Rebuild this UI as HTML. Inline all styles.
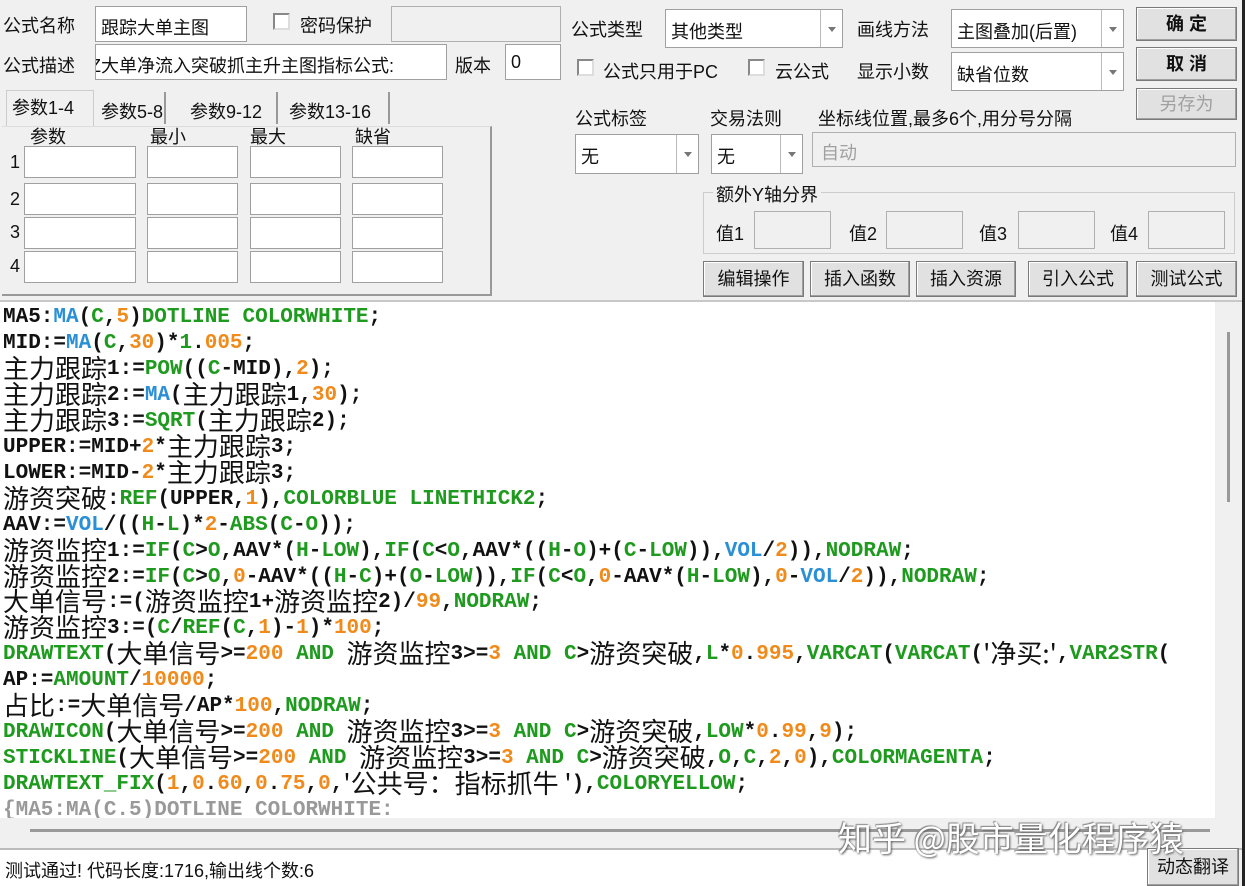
<!DOCTYPE html>
<html><head><meta charset="utf-8">
<style>
*{margin:0;padding:0;box-sizing:border-box}
body{width:1245px;height:886px;background:#f0f0f0;position:relative;overflow:hidden;font-family:"Liberation Sans","Noto Sans CJK SC",sans-serif;font-size:18px;color:#111}
.a{position:absolute;white-space:nowrap}
.in{position:absolute;background:#fff;border:1px solid #a0a0a0}
.dis{position:absolute;background:#f0f0f0;border:1px solid #b0b0b0}
.btn{position:absolute;background:#e1e1e1;border:1px solid #7a7a7a;box-shadow:inset -1px -1px 0 #a0a0a0,inset 1px 1px 0 #fff;text-align:center;font-size:18px}
.cb{position:absolute;width:17px;height:17px;background:#fff;border:2px solid #888;border-right-color:#ddd;border-bottom-color:#ddd}
.dd{position:absolute;right:0;top:0;bottom:0;width:22px;border-left:1px solid #bbb}
.dd:after{content:"";position:absolute;left:7px;top:50%;margin-top:-2px;border-left:4px solid transparent;border-right:4px solid transparent;border-top:5px solid #777}
#code{position:absolute;left:0;top:302px;width:1215px;height:516px;background:#fff;overflow:hidden}
.l{position:absolute;left:3px;height:26px;line-height:26px;font-family:"Liberation Mono",monospace;font-weight:bold;font-size:21px;white-space:nowrap;color:#111}
.k{font-family:"Noto Sans CJK SC",sans-serif;font-weight:normal;font-size:26px;line-height:0;letter-spacing:0;position:relative;top:4px}
.g{color:#1e9a1e}.b{color:#2b8fd6}.o{color:#f08a1a}
</style></head><body>
<div class="a" style="left:3px;top:12px">公式名称</div>
<div class="in" style="left:95px;top:6px;width:152px;height:36px"><span class="a" style="left:5px;top:7px">跟踪大单主图</span></div>
<div class="cb" style="left:273px;top:13px"></div>
<div class="a" style="left:300px;top:12px">密码保护</div>
<div class="dis" style="left:391px;top:6px;width:170px;height:36px"></div>
<div class="a" style="left:3px;top:52px">公式描述</div>
<div class="in" style="left:95px;top:44px;width:352px;height:36px;overflow:hidden"><span class="a" style="left:-6px;top:7px">Z大单净流入突破抓主升主图指标公式:</span></div>
<div class="a" style="left:455px;top:52px">版本</div>
<div class="in" style="left:505px;top:44px;width:56px;height:36px"><span class="a" style="left:5px;top:7px">0</span></div>
<div class="a" style="left:6px;top:90px;width:88px;height:36px;border:1px solid #ccc;border-bottom:none;background:#f0f0f0"></div>
<div class="a" style="left:12px;top:94px">参数1-4</div>
<div class="a" style="left:94px;top:92px;width:72px;height:32px;border-right:2px solid #999"></div>
<div class="a" style="left:101px;top:98px">参数5-8</div>
<div class="a" style="left:166px;top:92px;width:112px;height:32px;border-right:2px solid #999"></div>
<div class="a" style="left:190px;top:98px">参数9-12</div>
<div class="a" style="left:278px;top:92px;width:112px;height:32px;border-right:2px solid #999"></div>
<div class="a" style="left:289px;top:98px">参数13-16</div>
<div class="a" style="left:2px;top:126px;width:490px;height:170px;border-right:2px solid #999;border-bottom:2px solid #999;border-top:1px solid #ddd"></div>
<div class="a" style="left:30px;top:123px">参数</div>
<div class="a" style="left:150px;top:123px">最小</div>
<div class="a" style="left:250px;top:123px">最大</div>
<div class="a" style="left:355px;top:123px">缺省</div>
<div class="a" style="left:10px;top:152px">1</div><div class="a" style="left:10px;top:189px">2</div><div class="a" style="left:10px;top:222px">3</div><div class="a" style="left:10px;top:256px">4</div>
<div class="in" style="left:24px;top:146px;width:112px;height:32px"></div><div class="in" style="left:147px;top:146px;width:91px;height:32px"></div><div class="in" style="left:250px;top:146px;width:91px;height:32px"></div><div class="in" style="left:352px;top:146px;width:91px;height:32px"></div>
<div class="in" style="left:24px;top:183px;width:112px;height:32px"></div><div class="in" style="left:147px;top:183px;width:91px;height:32px"></div><div class="in" style="left:250px;top:183px;width:91px;height:32px"></div><div class="in" style="left:352px;top:183px;width:91px;height:32px"></div>
<div class="in" style="left:24px;top:217px;width:112px;height:32px"></div><div class="in" style="left:147px;top:217px;width:91px;height:32px"></div><div class="in" style="left:250px;top:217px;width:91px;height:32px"></div><div class="in" style="left:352px;top:217px;width:91px;height:32px"></div>
<div class="in" style="left:24px;top:251px;width:112px;height:32px"></div><div class="in" style="left:147px;top:251px;width:91px;height:32px"></div><div class="in" style="left:250px;top:251px;width:91px;height:32px"></div><div class="in" style="left:352px;top:251px;width:91px;height:32px"></div>
<div class="a" style="left:571px;top:16px">公式类型</div>
<div class="in" style="left:665px;top:9px;width:178px;height:39px"><span class="a" style="left:5px;top:8px">其他类型</span><div class="dd"></div></div>
<div class="a" style="left:857px;top:16px">画线方法</div>
<div class="in" style="left:951px;top:9px;width:173px;height:39px"><span class="a" style="left:5px;top:8px">主图叠加(后置)</span><div class="dd"></div></div>
<div class="btn" style="left:1136px;top:7px;width:101px;height:34px;line-height:32px;font-weight:bold">确 定</div>
<div class="cb" style="left:577px;top:59px"></div>
<div class="a" style="left:603px;top:58px">公式只用于PC</div>
<div class="cb" style="left:748px;top:59px"></div>
<div class="a" style="left:775px;top:58px">云公式</div>
<div class="a" style="left:857px;top:58px">显示小数</div>
<div class="in" style="left:951px;top:52px;width:173px;height:39px"><span class="a" style="left:5px;top:8px">缺省位数</span><div class="dd"></div></div>
<div class="btn" style="left:1136px;top:47px;width:101px;height:34px;line-height:32px;font-weight:bold">取 消</div>
<div class="btn" style="left:1136px;top:88px;width:101px;height:32px;line-height:30px;color:#a0a0a0">另存为</div>
<div class="a" style="left:575px;top:105px">公式标签</div>
<div class="a" style="left:710px;top:105px">交易法则</div>
<div class="a" style="left:818px;top:105px">坐标线位置,最多6个,用分号分隔</div>
<div class="in" style="left:575px;top:134px;width:124px;height:40px"><span class="a" style="left:5px;top:8px">无</span><div class="dd"></div></div>
<div class="in" style="left:711px;top:134px;width:92px;height:40px"><span class="a" style="left:5px;top:8px">无</span><div class="dd"></div></div>
<div class="dis" style="left:812px;top:132px;width:424px;height:35px"><span class="a" style="left:8px;top:6px;color:#a0a0a0">自动</span></div>
<div class="a" style="left:703px;top:192px;width:532px;height:62px;border:1px solid #ccc"></div>
<div class="a" style="left:713px;top:181px;background:#f0f0f0;padding:0 3px">额外Y轴分界</div>
<div class="a" style="left:716px;top:220px">值1</div><div class="dis" style="left:754px;top:211px;width:77px;height:38px"></div>
<div class="a" style="left:849px;top:220px">值2</div><div class="dis" style="left:886px;top:211px;width:77px;height:38px"></div>
<div class="a" style="left:979px;top:220px">值3</div><div class="dis" style="left:1018px;top:211px;width:77px;height:38px"></div>
<div class="a" style="left:1110px;top:220px">值4</div><div class="dis" style="left:1148px;top:211px;width:77px;height:38px"></div>
<div class="btn" style="left:703px;top:261px;width:101px;height:36px;line-height:34px">编辑操作</div>
<div class="btn" style="left:810px;top:261px;width:100px;height:36px;line-height:34px">插入函数</div>
<div class="btn" style="left:916px;top:261px;width:100px;height:36px;line-height:34px">插入资源</div>
<div class="btn" style="left:1028px;top:261px;width:100px;height:36px;line-height:34px">引入公式</div>
<div class="btn" style="left:1136px;top:261px;width:101px;height:36px;line-height:34px">测试公式</div>
<div class="a" style="left:0;top:300px;width:1245px;height:2px;background:#c8c8c8"></div>
<div id="code">
<div class="l" style="top:3px">MA5:<span class="b">MA</span>(<span class="g">C</span>,<span class="o">5</span>)<span class="g">DOTLINE COLORWHITE</span>;</div>
<div class="l" style="top:29px">MID:=<span class="b">MA</span>(<span class="g">C</span>,<span class="o">30</span>)*<span class="g">1</span>.<span class="o">005</span>;</div>
<div class="l" style="top:55px"><span class="k">主力跟踪</span>1:=<span class="g">POW</span>((<span class="g">C</span>-MID),<span class="o">2</span>);</div>
<div class="l" style="top:81px"><span class="k">主力跟踪</span>2:=<span class="b">MA</span>(<span class="k">主力跟踪</span>1,<span class="o">30</span>);</div>
<div class="l" style="top:107px"><span class="k">主力跟踪</span>3:=<span class="g">SQRT</span>(<span class="k">主力跟踪</span>2);</div>
<div class="l" style="top:133px">UPPER:=MID+<span class="o">2</span>*<span class="k">主力跟踪</span>3;</div>
<div class="l" style="top:159px">LOWER:=MID-<span class="o">2</span>*<span class="k">主力跟踪</span>3;</div>
<div class="l" style="top:185px"><span class="k">游资突破</span>:<span class="g">REF</span>(UPPER,<span class="o">1</span>),<span class="g">COLORBLUE LINETHICK2</span>;</div>
<div class="l" style="top:211px">AAV:=<span class="b">VOL</span>/((<span class="g">H</span>-<span class="g">L</span>)*<span class="o">2</span>-<span class="g">ABS</span>(<span class="g">C</span>-<span class="g">O</span>));</div>
<div class="l" style="top:237px"><span class="k">游资监控</span>1:=<span class="g">IF</span>(<span class="g">C</span>&gt;<span class="g">O</span>,AAV*(<span class="g">H</span>-<span class="g">LOW</span>),<span class="g">IF</span>(<span class="g">C</span>&lt;<span class="g">O</span>,AAV*((<span class="g">H</span>-<span class="g">O</span>)+(<span class="g">C</span>-<span class="g">LOW</span>)),<span class="b">VOL</span>/<span class="o">2</span>)),<span class="g">NODRAW</span>;</div>
<div class="l" style="top:263px"><span class="k">游资监控</span>2:=<span class="g">IF</span>(<span class="g">C</span>&gt;<span class="g">O</span>,<span class="o">0</span>-AAV*((<span class="g">H</span>-<span class="g">C</span>)+(<span class="g">O</span>-<span class="g">LOW</span>)),<span class="g">IF</span>(<span class="g">C</span>&lt;<span class="g">O</span>,<span class="o">0</span>-AAV*(<span class="g">H</span>-<span class="g">LOW</span>),<span class="o">0</span>-<span class="b">VOL</span>/<span class="o">2</span>)),<span class="g">NODRAW</span>;</div>
<div class="l" style="top:288px"><span class="k">大单信号</span>:=(<span class="k">游资监控</span>1+<span class="k">游资监控</span>2)/<span class="o">99</span>,<span class="g">NODRAW</span>;</div>
<div class="l" style="top:314px"><span class="k">游资监控</span>3:=(<span class="g">C</span>/<span class="g">REF</span>(<span class="g">C</span>,<span class="o">1</span>)-<span class="o">1</span>)*<span class="o">100</span>;</div>
<div class="l" style="top:340px"><span class="g">DRAWTEXT</span>(<span class="k">大单信号</span>&gt;=<span class="o">200</span> <span class="g">AND</span> <span class="k">游资监控</span>3&gt;=<span class="o">3</span>  <span class="g">AND</span> <span class="g">C</span>&gt;<span class="k">游资突破</span>,<span class="g">L</span>*<span class="o">0</span>.<span class="o">995</span>,<span class="g">VARCAT</span>(<span class="g">VARCAT</span>(<span class="k">'净买:'</span>,<span class="g">VAR2STR</span>(</div>
<div class="l" style="top:366px">AP:=<span class="g">AMOUNT</span>/<span class="o">10000</span>;</div>
<div class="l" style="top:392px"><span class="k">占比</span>:=<span class="k">大单信号</span>/AP*<span class="o">100</span>,<span class="g">NODRAW</span>;</div>
<div class="l" style="top:418px"><span class="g">DRAWICON</span>(<span class="k">大单信号</span>&gt;=<span class="o">200</span> <span class="g">AND</span> <span class="k">游资监控</span>3&gt;=<span class="o">3</span> <span class="g">AND</span> <span class="g">C</span>&gt;<span class="k">游资突破</span>,<span class="g">LOW</span>*<span class="o">0</span>.<span class="o">99</span>,<span class="o">9</span>);</div>
<div class="l" style="top:444px"><span class="g">STICKLINE</span>(<span class="k">大单信号</span>&gt;=<span class="o">200</span> <span class="g">AND</span> <span class="k">游资监控</span>3&gt;=<span class="o">3</span> <span class="g">AND</span> <span class="g">C</span>&gt;<span class="k">游资突破</span>,<span class="g">O</span>,<span class="g">C</span>,<span class="o">2</span>,<span class="o">0</span>),<span class="g">COLORMAGENTA</span>;</div>
<div class="l" style="top:470px"><span class="g">DRAWTEXT_FIX</span>(<span class="o">1</span>,<span class="o">0</span>.<span class="o">60</span>,<span class="o">0</span>.<span class="o">75</span>,<span class="o">0</span>,<span class="k">'公共号：指标抓牛 '</span>),<span class="g">COLORYELLOW</span>;</div>
<div class="l" style="top:496px;color:#999">{MA5:MA(C.5)DOTLINE COLORWHITE:</div>
</div>
<div class="a" style="left:1215px;top:302px;width:27px;height:516px;background:#f0f0f0"></div>
<div class="a" style="left:1227px;top:332px;width:3px;height:170px;background:#999"></div>
<div class="a" style="left:1242px;top:0;width:3px;height:886px;background:#222"></div>
<div class="a" style="left:0;top:818px;width:1215px;height:30px;background:#f0f0f0"></div>
<div class="a" style="left:30px;top:829px;width:1180px;height:3px;background:#999"></div>
<div class="a" style="left:0;top:848px;width:1242px;height:2px;background:#bbb"></div>
<div class="a" style="left:0;top:850px;width:1147px;height:36px;background:#fff"></div>
<div class="a" style="left:5px;top:857px;font-size:18px">测试通过! 代码长度:1716,输出线个数:6</div>
<div class="btn" style="left:1147px;top:848px;width:92px;height:38px;line-height:36px">动态翻译</div>
<div class="a" style="left:838px;top:812px;font-size:34px;color:#fff;text-shadow:1px 1px 2px #555,-1px -1px 1px #888;font-family:'Noto Sans CJK SC',sans-serif">知乎 @股市量化程序猿</div>
</body></html>
